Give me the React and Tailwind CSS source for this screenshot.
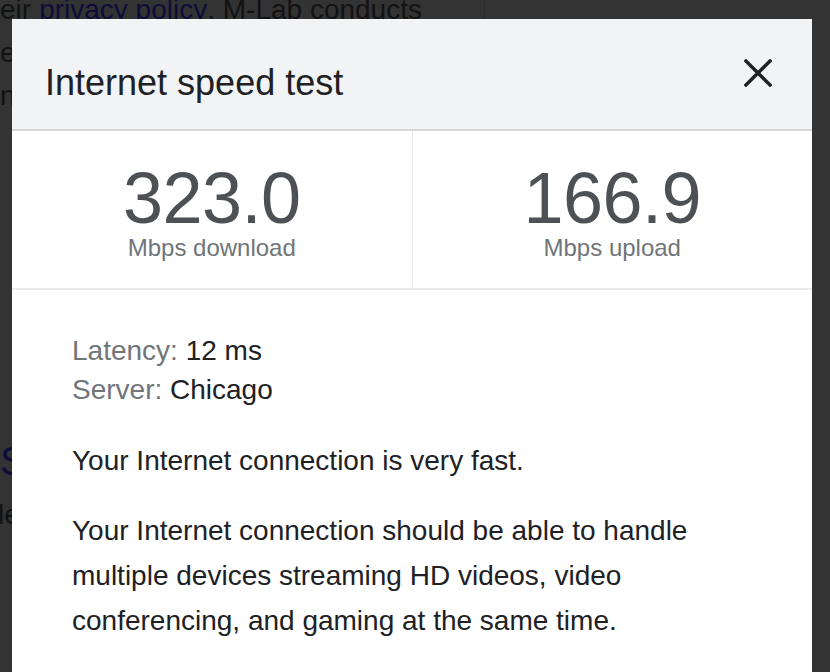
import React from "react";

export default function App() {
  return (
    <div
      className="relative w-[830px] h-[672px] overflow-hidden bg-[#333333]"
      style={{ fontFamily: '"Liberation Sans", Arial, sans-serif' }}
    >
      {/* dimmed page underneath */}
      <div className="flex flex-col text-[28px] leading-[43px] text-[#121212] whitespace-nowrap -mt-[12px]">
        <div className="flex">
          <span>eir </span>
          <span className="text-[#0e0c38] ml-[8px] underline">privacy policy</span>
          <span>. M-Lab conducts</span>
          <div className="ml-[62px] -mt-[5px] w-px h-[40px] bg-[#2a2a2a]" />
        </div>
        <div>etwork</div>
        <div>nyone</div>
        <div className="mt-[319px] text-[40px] leading-[50px] text-[#0e0c38]">Speed</div>
        <div className="mt-[7px] -ml-[2px]">learn</div>
      </div>

      {/* modal */}
      <div className="absolute left-[12px] top-[19px] w-[800px] h-[700px] bg-white flex flex-col">
        <div className="flex justify-between items-start h-[112px] bg-[#f1f3f4] border-b-2 border-[#d6d7d8] pl-[33px] pr-[40px]">
          <div className="mt-[46px] text-[36px] leading-[36px] text-[#202124]">
            Internet speed test
          </div>
          <svg className="mt-[40px]" width="28" height="28" viewBox="0 0 28 28">
            <path d="M2 2 L26 26 M26 2 L2 26" stroke="#202124" strokeWidth="3.4" strokeLinecap="square" />
          </svg>
        </div>

        <div className="flex border-b-2 border-[#ebebeb]">
          <div className="flex-1 flex flex-col items-center pt-[32px] pb-[26px] border-r border-[#ebebeb]">
            <div className="text-[72px] leading-[70px] text-[#4d5156] tracking-[-0.5px]">323.0</div>
            <div className="mt-[1px] text-[24px] leading-[28px] text-[#70757a]">Mbps download</div>
          </div>
          <div className="flex-1 flex flex-col items-center pt-[32px] pb-[26px]">
            <div className="text-[72px] leading-[70px] text-[#4d5156] tracking-[-0.5px]">166.9</div>
            <div className="mt-[1px] text-[24px] leading-[28px] text-[#70757a]">Mbps upload</div>
          </div>
        </div>

        <div className="pl-[60px] pt-[41px] text-[28px] text-[#202124]">
          <div className="leading-[39px]">
            <div>
              <span className="text-[#70757a]">Latency: </span>12 ms
            </div>
            <div>
              <span className="text-[#70757a]">Server: </span>Chicago
            </div>
          </div>
          <p className="mt-[30px] leading-[44px]">Your Internet connection is very fast.</p>
          <p className="mt-[25px] leading-[45px] w-[640px]">
            Your Internet connection should be able to handle multiple devices streaming HD videos, video
            conferencing, and gaming at the same time.
          </p>
        </div>
      </div>
    </div>
  );
}
